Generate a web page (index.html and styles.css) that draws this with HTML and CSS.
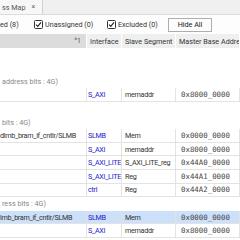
FILE: index.html
```html
<!DOCTYPE html>
<html>
<head>
<meta charset="utf-8">
<link rel="stylesheet" href="styles.css">
</head>
<body>
<div class="app">
  <div class="tabbar">
    <div class="tab"><span class="tab-title">ss Map</span><span class="tab-close">×</span></div>
  </div>
  <div class="toolbar">
    <span class="label first">ed (8)</span>
    <span class="check"><svg width="9" height="9" viewBox="0 0 9 9"><rect x="0.5" y="0.5" width="8" height="8" rx="1" fill="#fff" stroke="#333"/><path d="M2 4.6 L3.8 6.4 L7 2.4" fill="none" stroke="#222" stroke-width="1.1"/></svg></span>
    <span class="label second">Unassigned (0)</span>
    <span class="check"><svg width="9" height="9" viewBox="0 0 9 9"><rect x="0.5" y="0.5" width="8" height="8" rx="1" fill="#fff" stroke="#333"/><path d="M2 4.6 L3.8 6.4 L7 2.4" fill="none" stroke="#222" stroke-width="1.1"/></svg></span>
    <span class="label third">Excluded (0)</span>
    <button class="btn">Hide All</button>
  </div>
  <div class="grid">
    <div class="hcell sorted"><span class="sort">^1</span></div>
    <div class="hcell">Interface</div>
    <div class="hcell">Slave Segment</div>
    <div class="hcell">Master Base Address</div>

    <div class="group"></div>
    <div class="group"></div>
    <div class="group muted">address bits : 4G)</div>

    <div class="cell"></div><div class="cell link">S_AXI</div><div class="cell">memaddr</div><div class="cell addr">0x8000_0000</div>

    <div class="group"></div>
    <div class="group muted">bits : 4G)</div>

    <div class="cell name">dlmb_bram_if_cntlr/SLMB</div><div class="cell link">SLMB</div><div class="cell">Mem</div><div class="cell addr">0x0000_0000</div>
    <div class="cell"></div><div class="cell link">S_AXI</div><div class="cell">memaddr</div><div class="cell addr">0x8000_0000</div>
    <div class="cell"></div><div class="cell link">S_AXI_LITE</div><div class="cell">S_AXI_LITE_reg</div><div class="cell addr">0x44A0_0000</div>
    <div class="cell"></div><div class="cell link">S_AXI_LITE</div><div class="cell">Reg</div><div class="cell addr">0x44A1_0000</div>
    <div class="cell"></div><div class="cell link">ctrl</div><div class="cell">Reg</div><div class="cell addr">0x44A2_0000</div>

    <div class="group muted">ress bits : 4G)</div>

    <div class="cell name sel">lmb_bram_if_cntlr/SLMB</div><div class="cell link sel">SLMB</div><div class="cell sel">Mem</div><div class="cell addr sel">0x0000_0000</div>
    <div class="cell"></div><div class="cell link">S_AXI</div><div class="cell">memaddr</div><div class="cell addr">0x8000_0000</div>
  </div>
</div>
</body>
</html>
```
FILE: styles.css
```css
html, body {
  margin: 0;
  padding: 0;
  background: #ffffff;
}
.app {
  width: 240px;
  height: 240px;
  overflow: hidden;
  font-family: Roboto, "Liberation Sans", sans-serif;
  font-size: 7.2px;
  color: #333;
}
.tabbar {
  height: 15px;
  background: #f0f0f0;
  border-bottom: 1px solid #dcdcdc;
  display: flex;
  box-sizing: border-box;
}
.tab {
  width: 43px;
  background: #f7f7f7;
  border-right: 1px solid #d0d0d0;
  display: flex;
  align-items: center;
  gap: 6px;
  padding-left: 2px;
  box-sizing: border-box;
  white-space: nowrap;
  color: #555;
}
.tab-close {
  color: #666;
  font-size: 7px;
}
.toolbar {
  height: 19px;
  display: flex;
  align-items: center;
  background: #fdfdfd;
  white-space: nowrap;
}
.label { color: #333; }
.label.first { width: 34px; }
.label.second { width: 62px; }
.label.third { width: 50px; }
.check { display: flex; margin-right: 2px; }
.btn {
  width: 44px;
  height: 14px;
  padding: 0;
  font: inherit;
  color: #222;
  background: #fdfdfd;
  border: 1px solid #adadad;
  border-radius: 0;
}
.grid {
  display: grid;
  grid-template-columns: 87px 35px 54px 1fr;
  grid-auto-rows: 13.6px;
}
.hcell {
  height: 14px;
  box-sizing: border-box;
  background: #efefef;
  border-right: 1px solid #fff;
  display: flex;
  align-items: center;
  padding-left: 3px;
  white-space: nowrap;
  overflow: hidden;
  color: #333;
}
.hcell:last-child { padding-left: 4px; }
.hcell.sorted {
  background: #dcdcdc;
  justify-content: flex-end;
  padding-right: 5px;
}
.sort { color: #555; font-size: 7px; }
.group {
  grid-column: 1 / -1;
  display: flex;
  align-items: center;
  white-space: nowrap;
}
.muted { color: #888; padding-left: 2px; }
.cell {
  box-sizing: border-box;
  border-right: 1px solid #e3e3e3;
  border-bottom: 1px solid #e3e3e3;
  display: flex;
  align-items: center;
  padding-left: 3px;
  white-space: nowrap;
  overflow: hidden;
  letter-spacing: -0.3px;
}
.cell.name { padding-left: 0; }
.cell.link { color: #2222cc; padding-left: 1px; }
.cell.addr {
  font-family: "DejaVu Sans Mono", monospace;
  font-size: 7.4px;
  letter-spacing: 0;
  padding-left: 5px;
  color: #444;
}
.cell.sel { background: #cce0fa; }
```
